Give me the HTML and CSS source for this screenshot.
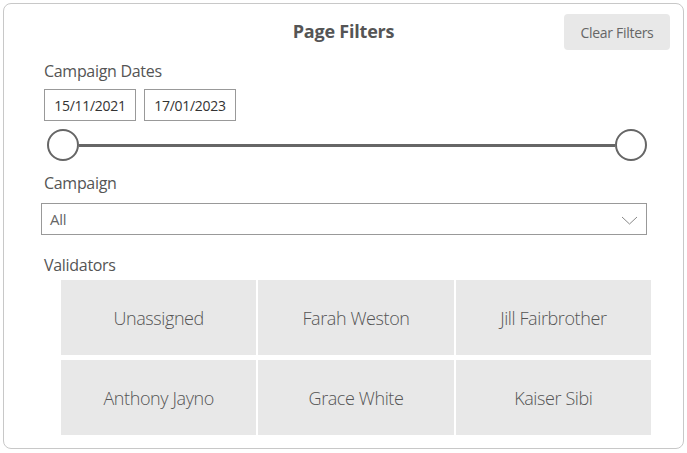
FILE: index.html
```html
<!DOCTYPE html>
<html>
<head>
<meta charset="utf-8">
<link rel="stylesheet" href="styles.css">
</head>
<body>
<div class="card">
  <div class="header">
    <div class="title">Page Filters</div>
    <button class="clear">Clear Filters</button>
  </div>
  <div class="label first">Campaign Dates</div>
  <div class="dates">
    <div class="date">15/11/2021</div>
    <div class="date">17/01/2023</div>
  </div>
  <div class="slider">
    <span class="knob"></span>
    <span class="track"></span>
    <span class="knob"></span>
  </div>
  <div class="label camp">Campaign</div>
  <div class="dropdown">
    <span>All</span>
    <svg class="chev" width="17" height="9" viewBox="0 0 17 9"><path d="M1 1 L8.5 8 L16 1" fill="none" stroke="#888" stroke-width="1"/></svg>
  </div>
  <div class="label val">Validators</div>
  <div class="grid">
    <div class="cell">Unassigned</div>
    <div class="cell">Farah Weston</div>
    <div class="cell">Jill Fairbrother</div>
    <div class="cell">Anthony Jayno</div>
    <div class="cell">Grace White</div>
    <div class="cell">Kaiser Sibi</div>
  </div>
</div>
</body>
</html>
```
FILE: styles.css
```css
html, body { margin: 0; padding: 0; background: #fff; }
body { font-family: "Open Sans", "Noto Sans", sans-serif; color: #555; }
.card {
  margin: 3px;
  width: 679px;
  height: 444px;
  border: 1px solid #c8c8c8;
  border-radius: 8px;
  box-sizing: content-box;
  position: relative;
}
.header {
  display: flex;
  justify-content: center;
  align-items: center;
  height: 36px;
  margin-top: 10px;
  position: relative;
}
.title { font-weight: bold; font-size: 18px; color: #555; letter-spacing: -0.2px; margin-top: -2px; }
.clear {
  position: absolute;
  right: 13px;
  top: 0;
  width: 106px;
  height: 36px;
  border: none;
  border-radius: 4px;
  background: #e8e8e8;
  color: #666;
  font-family: inherit;
  font-size: 14px;
  letter-spacing: -0.3px;
  padding: 0;
}
.label {
  font-size: 16px;
  color: #555;
  margin-left: 40px;
  letter-spacing: -0.3px;
  line-height: 20px;
}
.label.first { margin-top: 11px; }
.dates { display: flex; gap: 8px; margin: 8px 0 0 40px; }
.date {
  width: 90px;
  height: 30px;
  border: 1px solid #999;
  font-size: 14px;
  color: #333;
  display: flex;
  align-items: center;
  justify-content: center;
  letter-spacing: -0.3px;
}
.slider {
  display: flex;
  align-items: center;
  margin: 8px 0 0 43px;
  width: 600px;
  height: 32px;
}
.knob {
  width: 28px;
  height: 28px;
  border: 2px solid #666;
  border-radius: 50%;
  background: #fff;
  flex: none;
}
.track { flex: 1; height: 3px; background: #666; }
.label.camp { margin-top: 12px; }
.dropdown {
  margin: 10px 0 0 37px;
  width: 588px;
  height: 30px;
  border: 1px solid #999;
  display: flex;
  align-items: center;
  justify-content: space-between;
  padding: 0 8px 0 8px;
  box-sizing: content-box;
  font-size: 15px;
  color: #666;
  letter-spacing: -0.3px;
}
.chev { margin-top: 2px; }
.label.val { margin-top: 20px; }
.grid {
  display: grid;
  grid-template-columns: repeat(3, 1fr);
  grid-auto-rows: 75px;
  column-gap: 2px;
  row-gap: 5px;
  width: 590px;
  margin: 5px 0 0 57px;
}
.cell {
  background: #e8e8e8;
  display: flex;
  align-items: center;
  justify-content: center;
  font-size: 18px;
  font-weight: 300;
  color: #555;
  letter-spacing: -0.4px;
}
```
